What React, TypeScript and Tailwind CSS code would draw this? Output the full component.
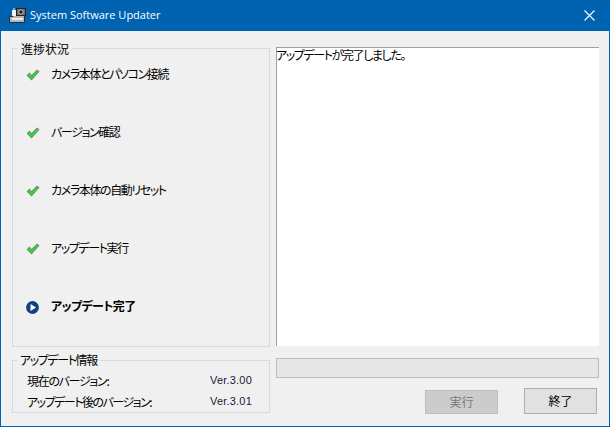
const jp = "font-['Noto_Sans_CJK_JP','Liberation_Sans',sans-serif] [font-feature-settings:'palt']";

function Check() {
  return (
    <svg width="14" height="12" viewBox="0 0 14 12" className="shrink-0">
      <path d="M0.6 6.5 L3.4 3.6 L5.6 6 L11 0.5 L13.5 2.4 L5.6 11.5 Z" fill="#808080" />
      <path d="M2 6.5 L3.5 5 L5.6 7.4 L11 2 L12.2 2.8 L5.6 10 Z" fill="#14f014" />
    </svg>
  );
}

function Play() {
  return (
    <svg width="13" height="13" viewBox="0 0 13 13" className="shrink-0">
      <circle cx="6.5" cy="6.5" r="6.4" fill="#123f85" />
      <path d="M4.5 3 L10 6.5 L4.5 10 Z" fill="#ffffff" />
    </svg>
  );
}

function Camera() {
  return (
    <svg width="18" height="18" viewBox="0 0 18 18" className="shrink-0">
      <path d="M0.5 9.5 H4 V8 H15.5 V15.5 H0.5 Z" fill="#b5b5b5" stroke="#2a2a2a" strokeWidth="1" />
      <rect x="3" y="11" width="11" height="2" fill="#eeeeee" />
      <rect x="3" y="3" width="4" height="6" fill="#f2f2f2" />
      <rect x="4" y="1" width="2" height="2" fill="#6fa8dc" />
      <rect x="7.5" y="1.5" width="9" height="7" fill="#6f6f6f" stroke="#222" strokeWidth="1" />
      <circle cx="12" cy="5" r="2.2" fill="#1f1f1f" stroke="#dddddd" strokeWidth="0.8" />
    </svg>
  );
}

const steps = [
  "カメラ本体とパソコン接続",
  "バージョン確認",
  "カメラ本体の自動リセット",
  "アップデート実行",
];

export default function App() {
  return (
    <div className={`w-[610px] h-[427px] flex flex-col bg-[#f0f0f0] border-x border-b border-[#0063b1] overflow-hidden ${jp}`}>
      <div className="h-[31px] shrink-0 -mx-px bg-[#0063b1] flex items-center pl-[9px] pr-[15px] text-white">
        <Camera />
        <span className="ml-[3px] text-[11px] font-['Open_Sans',sans-serif]">System Software Updater</span>
        <svg width="11" height="11" viewBox="0 0 11 11" className="ml-auto">
          <path d="M0.5 0.5 L10.5 10.5 M10.5 0.5 L0.5 10.5" stroke="#ffffff" strokeWidth="1.1" />
        </svg>
      </div>

      <div className="flex flex-1 pl-[11px] pr-[10px] pt-[16px] gap-[6px]">
        <div className="w-[258px] shrink-0 flex flex-col">
          <div className="relative mt-px h-[299px] border border-[#d9d9d9] pl-[13px] pt-[17px]">
            <span className="absolute left-[5px] -top-[8px] bg-[#f0f0f0] px-[3px] text-[12px] leading-[16px] text-black">進捗状況</span>
            <ul className="flex flex-col gap-[40px]">
              {steps.map((s) => (
                <li key={s} className="flex items-center h-[18px] gap-[11px] text-[12px] text-black tracking-[-1.4px]">
                  <Check />
                  <span className="-mt-[2px]">{s}</span>
                </li>
              ))}
              <li className="flex items-center h-[18px] gap-[12px] text-[12px] font-bold text-black tracking-[-0.6px]">
                <Play />
                <span className="-mt-[2px]">アップデート完了</span>
              </li>
            </ul>
          </div>
          <div className="relative mt-[13px] h-[53px] border border-[#d9d9d9] pl-[14px] pr-[14px] pt-[9px] text-[12px] text-black">
            <span className="absolute left-[4px] -top-[9px] bg-[#f0f0f0] px-[3px] leading-[16px] tracking-[-1.4px]">アップデート情報</span>
            <div className="flex justify-between h-[21px] items-center">
              <span className="tracking-[-1.3px]">現在のバージョン:</span>
              <span className="w-[45px] text-[11px] text-[#1a1a3a] font-['Liberation_Sans',sans-serif] tracking-[0.2px]">Ver.3.00</span>
            </div>
            <div className="flex justify-between h-[21px] items-center">
              <span className="tracking-[-1.5px]">アップデート後のバージョン:</span>
              <span className="w-[45px] text-[11px] text-[#1a1a3a] font-['Liberation_Sans',sans-serif] tracking-[0.2px]">Ver.3.01</span>
            </div>
          </div>
        </div>

        <div className="flex-1 flex flex-col">
          <div className="h-[299px] bg-white border-l border-t border-[#a0a0a0] text-[12px] leading-[14px] text-black tracking-[-1.4px]">
            <span className="-ml-px">アップデートが完了しました。</span>
          </div>
          <div className="mt-[12px] h-[20px] bg-[#e6e6e6] border border-[#bcbcbc]" />
          <div className="mt-[10px] flex items-start pr-[2px] justify-end gap-[26px]">
            <button className="mt-[2px] w-[73px] h-[24px] bg-[#cccccc] border border-[#bfbfbf] text-[12px] text-[#7a7a7a]">実行</button>
            <button className="w-[73px] h-[26px] bg-[#e1e1e1] border border-[#adadad] text-[12px] text-black">終了</button>
          </div>
        </div>
      </div>
    </div>
  );
}
